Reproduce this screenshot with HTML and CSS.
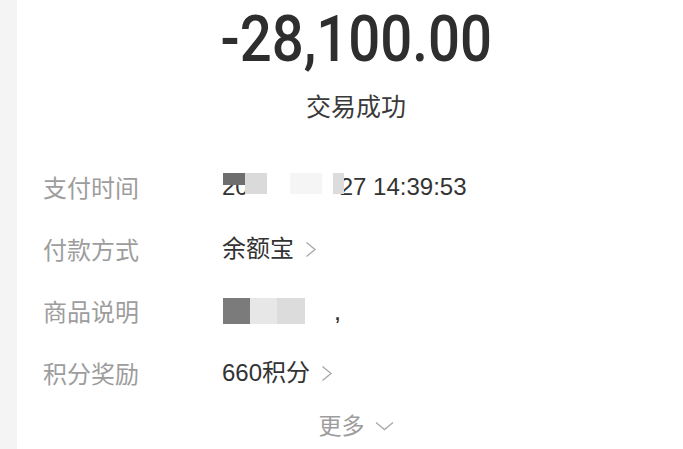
FILE: index.html
```html
<!DOCTYPE html>
<html lang="zh-CN">
<head>
<meta charset="utf-8">
<title>交易详情</title>
<link rel="stylesheet" href="styles.css">
</head>
<body>
<div class="page">
  <aside class="rail"></aside>
  <main class="detail">
    <header class="summary">
      <div class="amount"><span class="amount-num">-28,100.00</span></div>
      <div class="status">交易成功</div>
    </header>
    <dl class="fields">
      <div class="row">
        <dt>支付时间</dt>
        <dd><span class="masked"><span class="txt">20</span><span class="gap"></span><span class="txt">27 14:39:53</span><i class="mask m-dark"></i><i class="mask m-light"></i><i class="mask m-faint"></i><i class="mask m-light2"></i></span></dd>
      </div>
      <div class="row">
        <dt>付款方式</dt>
        <dd><span class="link">余额宝</span><svg class="chev" width="12" height="17" viewBox="0 0 12 17"><polyline points="1.5,1.5 10,8.5 1.5,15.5" fill="none" stroke="#ababab" stroke-width="1.4"/></svg></dd>
      </div>
      <div class="row">
        <dt>商品说明</dt>
        <dd><span class="blk b1"></span><span class="blk b2"></span><span class="blk b3"></span><span class="mark">,</span></dd>
      </div>
      <div class="row">
        <dt>积分奖励</dt>
        <dd><span class="link">660积分</span><svg class="chev" width="12" height="17" viewBox="0 0 12 17"><polyline points="1.5,1.5 10,8.5 1.5,15.5" fill="none" stroke="#ababab" stroke-width="1.4"/></svg></dd>
      </div>
    </dl>
    <div class="more"><span>更多</span><svg class="down" width="19" height="10" viewBox="0 0 19 10"><polyline points="1,1.5 9.5,8.5 18,1.5" fill="none" stroke="#ababab" stroke-width="1.4"/></svg></div>
  </main>
</div>
</body>
</html>
```

FILE: styles.css
```css
* { box-sizing: border-box; }
html, body { margin: 0; padding: 0; background: #fff; }
body {
  font-family: "Liberation Sans", "Noto Sans CJK SC", sans-serif;
  color: #333;
}
.page {
  display: flex;
  width: 683px;
  height: 449px;
  overflow: hidden;
}
.rail {
  flex: 0 0 17px;
  background: #f4f4f4;
}
.detail {
  flex: 1;
  display: flex;
  flex-direction: column;
}
.summary {
  display: flex;
  flex-direction: column;
  align-items: center;
  padding-left: 12px;
  padding-top: 8px;
}
.amount {
  height: 64px;
  line-height: 64px;
}
.amount-num {
  display: inline-block;
  font-family: Roboto, "Liberation Sans", sans-serif;
  font-weight: 500;
  font-size: 64px;
  color: #2e2e2e;
  transform: scaleX(0.88);
}
.status {
  margin-top: 17px;
  height: 32px;
  line-height: 32px;
  font-family: "Noto Sans CJK SC", sans-serif;
  font-size: 25px;
  color: #3a3a3a;
}
.fields {
  margin: 0;
  padding: 35px 0 0 26px;
}
.row {
  display: grid;
  grid-template-columns: 179px 1fr;
  align-items: center;
  height: 62px;
}
.row dt {
  font-family: "Noto Sans CJK SC", sans-serif;
  font-size: 24px;
  color: #9d9d9d;
  line-height: 30px;
}
.row dd {
  margin: 0;
  display: flex;
  align-items: center;
  font-size: 24px;
  line-height: 30px;
  color: #333;
}
.masked {
  position: relative;
  display: inline-flex;
  align-items: center;
  height: 30px;
}
.gap { display: inline-block; width: 91px; }
.mask { position: absolute; display: block; }
.m-dark { left: 1px; top: 1px; width: 22px; height: 12px; background: #6e6e6e; }
.m-light { left: 23px; top: 1px; width: 22px; height: 21px; background: #dadada; }
.m-faint { left: 68px; top: 1px; width: 32px; height: 21px; background: #f5f5f5; }
.m-light2 { left: 111px; top: 1px; width: 11px; height: 21px; background: #dcdcdc; }
.link { font-family: "Liberation Sans", "Noto Sans CJK SC", sans-serif; }
.chev { margin-left: 11px; }
.blk {
  display: inline-block;
  width: 27px;
  height: 26px;
  filter: blur(0.4px);
}
.b1 { margin-left: 1px; background: #7b7b7b; }
.b2 { background: #e7e7e7; }
.b3 { width: 28px; background: #dcdcdc; }
.mark {
  margin-left: 30px;
  margin-top: 6px;
  font-size: 18px;
  font-weight: bold;
  color: #333;
  line-height: 20px;
}
.more {
  display: flex;
  justify-content: center;
  align-items: center;
  padding-left: 12px;
  height: 40px;
  font-family: "Noto Sans CJK SC", sans-serif;
  font-size: 23px;
  color: #9d9d9d;
}
.down { margin-left: 10px; margin-top: 4px; }
```
